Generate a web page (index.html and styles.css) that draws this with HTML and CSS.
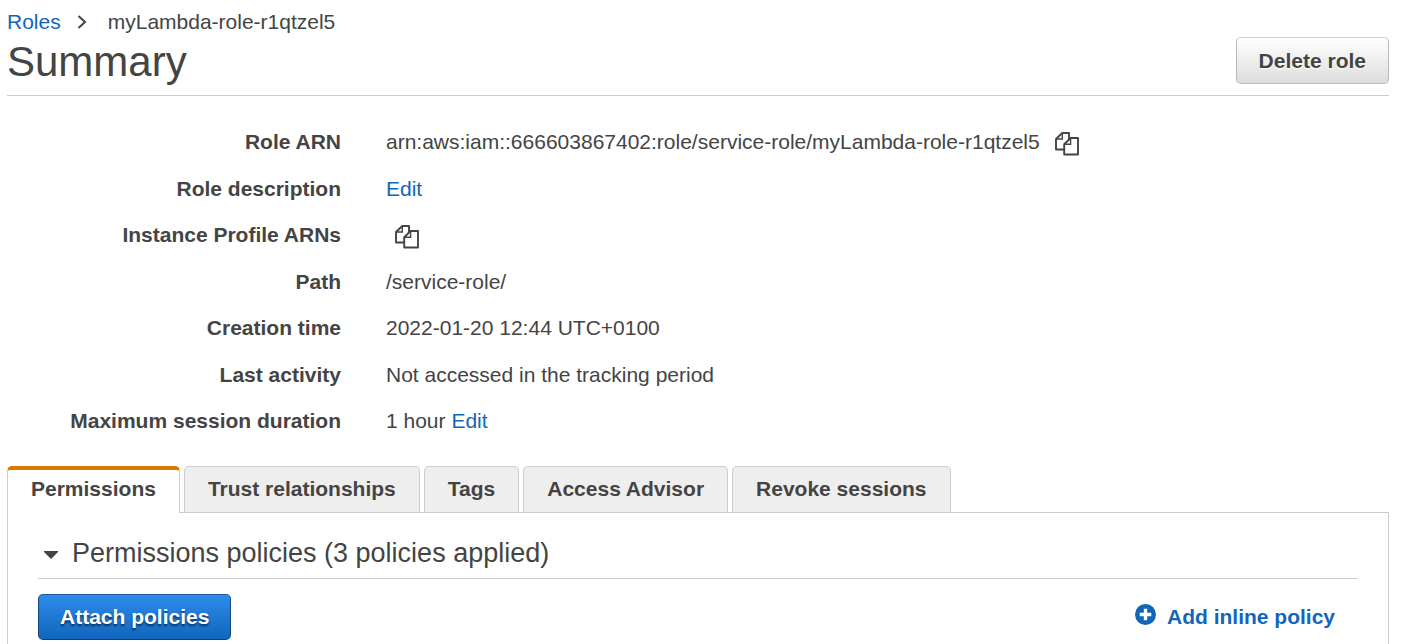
FILE: index.html
```html
<!DOCTYPE html>
<html lang="en">
<head>
<meta charset="utf-8">
<meta name="viewport" content="width=device-width, initial-scale=1">
<title>Role summary</title>
<link rel="stylesheet" href="styles.css">
</head>
<body>
<svg class="sprite" aria-hidden="true">
  <symbol id="copy" viewBox="0 0 26 26">
    <path d="M2 18.5V8L8.3 2H15V18.5Z" fill="#fff" stroke="#444" stroke-width="1.9" stroke-linejoin="round"/>
    <path d="M8.3 2V8H2" fill="none" stroke="#444" stroke-width="1.4"/>
    <path d="M10.2 23.5V13.2L16.6 7H24V23.5Z" fill="#fff" stroke="#444" stroke-width="1.9" stroke-linejoin="round"/>
    <path d="M16.6 7V13.2H10.2" fill="none" stroke="#444" stroke-width="1.4"/>
  </symbol>
</svg>
<main class="page">
  <nav class="breadcrumb" aria-label="Breadcrumb">
    <a href="#roles">Roles</a>
    <svg class="chevron" viewBox="0 0 10 14" aria-hidden="true"><path d="M1.5 1L8 7L1.5 13" fill="none" stroke="#444" stroke-width="2"/></svg>
    <span>myLambda-role-r1qtzel5</span>
  </nav>
  <header class="header">
    <h1 class="title">Summary</h1>
    <button class="button" type="button">Delete role</button>
  </header>
  <dl class="details">
    <dt>Role ARN</dt>
    <dd>arn:aws:iam::666603867402:role/service-role/myLambda-role-r1qtzel5<button class="copy copy-after" type="button" aria-label="Copy role ARN"><svg class="copy-icon"><use href="#copy"/></svg></button></dd>
    <dt>Role description</dt>
    <dd><a href="#description">Edit</a></dd>
    <dt>Instance Profile ARNs</dt>
    <dd><button class="copy copy-only" type="button" aria-label="Copy instance profile ARNs"><svg class="copy-icon"><use href="#copy"/></svg></button></dd>
    <dt>Path</dt>
    <dd>/service-role/</dd>
    <dt>Creation time</dt>
    <dd>2022-01-20 12:44 UTC+0100</dd>
    <dt>Last activity</dt>
    <dd>Not accessed in the tracking period</dd>
    <dt>Maximum session duration</dt>
    <dd><span>1 hour <a href="#duration">Edit</a></span></dd>
  </dl>
  <div class="tabs" role="tablist">
    <button class="tab tab-active" type="button" role="tab" aria-selected="true">Permissions</button>
    <button class="tab" type="button" role="tab" aria-selected="false">Trust relationships</button>
    <button class="tab" type="button" role="tab" aria-selected="false">Tags</button>
    <button class="tab" type="button" role="tab" aria-selected="false">Access Advisor</button>
    <button class="tab" type="button" role="tab" aria-selected="false">Revoke sessions</button>
  </div>
  <section class="panel" role="tabpanel">
    <h2 class="section-title">
      <button class="toggle" type="button" aria-expanded="true"><svg class="caret" viewBox="0 0 14 8" aria-hidden="true"><path d="M0 0H14V1L7 8L0 1Z" fill="#444"/></svg>Permissions policies (3 policies applied)</button>
    </h2>
    <div class="actions">
      <button class="button button-primary" type="button">Attach policies</button>
      <a class="add" href="#inline"><svg class="plus" viewBox="0 0 20 20" aria-hidden="true"><circle cx="10" cy="10" r="10" fill="#1166bb"/><path d="M10 4.5V15.5M4.5 10H15.5" stroke="#fff" stroke-width="3.2"/></svg>Add inline policy</a>
    </div>
  </section>
</main>
</body>
</html>
```

FILE: styles.css
```css
* { box-sizing: border-box; }

body {
  margin: 0;
  background: #fff;
  color: #444;
  font: 21px/1.5 "Liberation Sans", Arial, sans-serif;
}

a { color: #1166bb; text-decoration: none; }

button { font: inherit; color: inherit; cursor: pointer; }

.sprite { position: absolute; width: 0; height: 0; }

.page { padding: 8px 24px 0 7px; }

.breadcrumb { display: flex; align-items: center; line-height: 28px; }
.chevron { width: 10px; height: 14px; margin: 0 21px 0 16px; }

.header {
  display: flex;
  justify-content: space-between;
  align-items: flex-start;
  padding-bottom: 11px;
  border-bottom: 1px solid #ccc;
}
.title { margin: 3px 0 0; font-size: 42px; font-weight: 400; line-height: 45px; }

.button {
  height: 47px;
  margin-top: 1px;
  padding: 0 22px;
  border: 1px solid #b8b8b8;
  border-top-color: #d0d0d0;
  border-radius: 5px;
  background: linear-gradient(#fff, #ddd);
  font-weight: 700;
  text-shadow: 0 1px 2px #fff;
}
.button-primary {
  height: 46px;
  margin: 0;
  padding: 0 21px;
  border-color: #1a5a9e #15487c #12406f;
  background: linear-gradient(#2e8cec, #1166bb);
  color: #fff;
  text-shadow: 0 2px 2px #083360;
}

.details {
  display: grid;
  grid-template-columns: 334px 1fr;
  gap: 15px 45px;
  margin: 0;
  padding: 30px 0 29px;
}
.details dt { font-weight: 700; text-align: right; }
.details dd { display: flex; align-items: center; margin: 0; }

.copy { display: flex; padding: 4px 0 0; border: 0; background: none; }
.copy-after { margin-left: 14px; }
.copy-only { margin-left: 8px; }
.copy-icon { width: 26px; height: 26px; }

.tabs { display: flex; gap: 4px; }
.tab {
  height: 46px;
  padding: 0 23px;
  border: 1px solid #ccc;
  border-bottom: 0;
  border-radius: 5px 5px 0 0;
  background: #eee;
  font-weight: 700;
}
.tab-active {
  height: 47px;
  margin-bottom: -1px;
  padding-bottom: 4px;
  border-top: 4px solid #dd7700;
  background: #fff;
  z-index: 1;
}

.panel { padding: 22px 30px 20px; border: 1px solid #ccc; min-height: 160px; }

.section-title {
  margin: 0 0 15px;
  padding-bottom: 7px;
  border-bottom: 1px solid #ccc;
  font-size: 27px;
  font-weight: 400;
  line-height: 36px;
}
.toggle {
  display: flex;
  align-items: center;
  gap: 14px;
  padding: 0 6px;
  border: 0;
  background: none;
}
.caret { width: 14px; height: 8px; margin-top: 4px; }

.actions { display: flex; justify-content: space-between; align-items: center; }
.add { display: flex; align-items: center; gap: 11px; padding-right: 23px; font-weight: 700; }
.plus { width: 21px; height: 21px; margin-bottom: 4px; }
```
